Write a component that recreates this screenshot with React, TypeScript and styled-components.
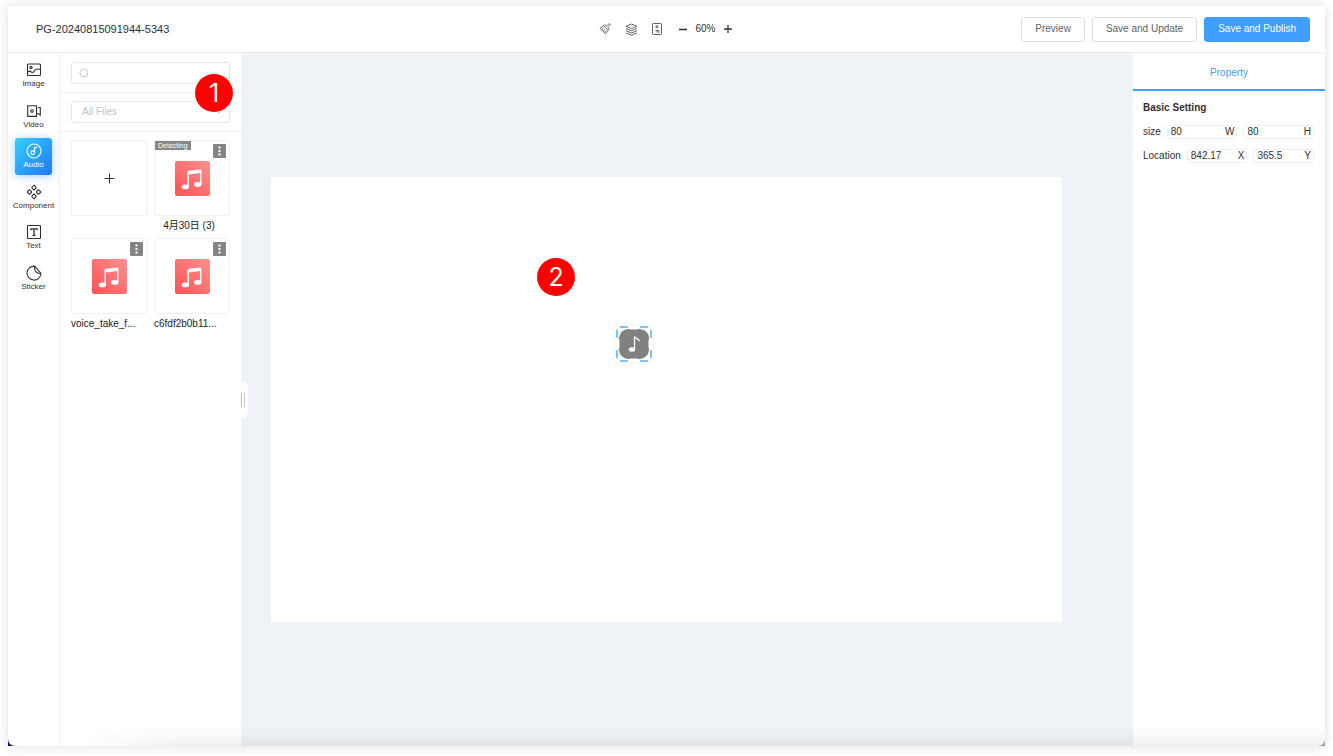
import React from "react";
import styled, { createGlobalStyle, css } from "styled-components";

const GlobalStyle = createGlobalStyle`
  * { box-sizing: border-box; }
  body {
    margin: 0;
    background: #fff;
    color: #303133;
    font: 10px/14px "Liberation Sans", "Noto Sans CJK SC", sans-serif;
  }
  button, input, select { font: inherit; color: inherit; margin: 0; }
  button { cursor: pointer; }
  svg { display: block; }
`;

const Page = styled.div`
  display: flex;
  min-height: 100vh;
  padding: 6px 8px 10px;
`;

const Frame = styled.div`
  position: relative;
  display: flex;
  flex: 1;
  min-width: 0;
  background: linear-gradient(90deg, #1f0a6b 50%, #a8a8a8 50%);
  box-shadow: 0 0 12px rgba(0, 0, 0, 0.13);
  &::after {
    content: "";
    position: absolute;
    inset: auto 0 0 72px;
    height: 22px;
    pointer-events: none;
    background: linear-gradient(rgba(0, 0, 0, 0), rgba(0, 0, 0, 0.02) 50%, rgba(0, 0, 0, 0.06));
    mask-image: linear-gradient(90deg, transparent, #000 100px);
  }
`;

const Shell = styled.div`
  display: flex;
  flex-direction: column;
  flex: 1;
  min-width: 0;
  overflow: hidden;
  border-radius: 0 0 7px 7px;
  background: #fff;
`;

const Header = styled.header`
  display: grid;
  grid-template-columns: 1fr auto 1fr;
  align-items: center;
  height: 47px;
  padding: 0 15px;
  border-bottom: 1px solid #ececec;
`;

const Title = styled.h1`
  margin: 0;
  padding-left: 13px;
  font-size: 11px;
  font-weight: 400;
`;

const Tools = styled.div`
  display: flex;
  align-items: center;
  gap: 12px;
`;

const Zoom = styled.div`
  display: flex;
  align-items: center;
  gap: 5px;
`;

const IconButton = styled.button`
  display: grid;
  place-items: center;
  width: 14px;
  height: 14px;
  padding: 0;
  border: 0;
  background: none;
`;

const Actions = styled.div`
  display: flex;
  justify-content: flex-end;
  gap: 7px;
`;

const ActionButton = styled.button<{ $primary?: boolean }>`
  height: 25px;
  padding: 0 13px;
  border: 1px solid ${(p) => (p.$primary ? "#409eff" : "#dcdfe6")};
  border-radius: 3px;
  background: ${(p) => (p.$primary ? "#409eff" : "#fff")};
  color: ${(p) => (p.$primary ? "#fff" : "#606266")};
  white-space: nowrap;
`;

const Body = styled.div`
  display: flex;
  flex: 1;
  min-height: 0;
`;

const Nav = styled.nav`
  width: 52px;
  flex: none;
  padding-top: 4px;
  border-right: 1px solid #f0f0f0;
`;

const NavList = styled.div`
  display: flex;
  flex-direction: column;
  justify-content: space-between;
  align-items: center;
  height: 240px;
`;

const NavItem = styled.button<{ $active?: boolean }>`
  display: flex;
  flex-direction: column;
  align-items: center;
  justify-content: center;
  width: 37px;
  height: 37px;
  padding: 0;
  border: 0;
  border-radius: 3px;
  background: none;
  font-size: 8px;
  line-height: 11px;
  ${(p) =>
    p.$active &&
    css`
      color: #fff;
      background: linear-gradient(135deg, #35d0ff, #1f78ff);
      box-shadow: 0 1px 8px rgba(64, 158, 255, 0.5);
    `}
`;

const Library = styled.aside`
  position: relative;
  width: 181px;
  flex: none;
  padding-top: 1px;
`;

const Filter = styled.div`
  padding: 8px 11px;
  border-bottom: 1px solid #f0f0f0;
`;

const control = css`
  width: 100%;
  height: 22px;
  border: 1px solid #e4e6eb;
  border-radius: 3px;
  background: #fff;
  color: #c0c4cc;
  outline: 0;
`;

const SearchBox = styled.label`
  ${control}
  display: flex;
  align-items: center;
  gap: 5px;
  padding: 0 7px;
  input {
    flex: 1;
    min-width: 0;
    border: 0;
    outline: 0;
    padding: 0;
  }
`;

const SelectBox = styled.div`
  position: relative;
  select {
    ${control}
    display: block;
    appearance: none;
    padding: 0 10px;
  }
  svg {
    position: absolute;
    right: 7px;
    top: 8px;
  }
`;

const Files = styled.div`
  display: grid;
  grid-template-columns: 76px 76px;
  gap: 2px 7px;
  padding: 8px 11px;
`;

const FileItem = styled.figure`
  margin: 0;
  height: 96px;
`;

const Tile = styled.div`
  position: relative;
  display: grid;
  place-items: center;
  height: 76px;
  border: 1px solid #f0f0f0;
  border-radius: 2px;
`;

const AddTile = styled(Tile).attrs({ as: "button", "aria-label": "Add audio" })`
  width: 76px;
  padding: 0;
  background: #fff;
`;

const FileName = styled.figcaption<{ $center?: boolean }>`
  padding: 3px 6px 0 0;
  color: #222;
  text-align: ${(p) => (p.$center ? "center" : "left")};
  white-space: nowrap;
`;

const Status = styled.span`
  position: absolute;
  left: 0;
  top: 0;
  padding: 0 3px;
  background: #888;
  color: #fff;
  font-size: 7px;
  line-height: 9px;
`;

const MoreButton = styled.button`
  position: absolute;
  right: 3px;
  top: 3px;
  display: grid;
  place-items: center;
  width: 13px;
  height: 14px;
  padding: 0;
  border: 0;
  border-radius: 1px;
  background: #848484;
`;

const Badge = styled.span`
  position: absolute;
  z-index: 3;
  width: 38px;
  height: 38px;
  border-radius: 50%;
  background: #f00;
  color: #fff;
  font: 25px/38px Inter, sans-serif;
  text-align: center;
`;

const LibraryBadge = styled(Badge)`
  right: 8px;
  top: 21px;
`;

const BoardBadge = styled(Badge)`
  left: 266px;
  top: 81px;
`;

const Stage = styled.main`
  position: relative;
  display: flex;
  align-items: center;
  flex: 1;
  min-width: 0;
  padding: 0 71px 0 30px;
  background: #eff3f8;
`;

const Grip = styled.button`
  position: absolute;
  left: 0;
  top: calc(50% - 18px);
  display: flex;
  align-items: center;
  gap: 2px;
  width: 7px;
  height: 36px;
  padding: 0;
  border: 0;
  border-radius: 0 6px 6px 0;
  background: #fff;
  i {
    width: 1px;
    height: 14px;
    background: #c8c8c8;
  }
`;

const Board = styled.div`
  position: relative;
  flex: 1;
  aspect-ratio: 16 / 9;
  background: #fff;
`;

const AudioNode = styled.div`
  position: absolute;
  left: 342px;
  top: 146px;
`;

const Properties = styled.aside`
  width: 192px;
  flex: none;
`;

const Tab = styled.button`
  display: block;
  width: 100%;
  height: 38px;
  padding: 3px 0 0;
  border: 0;
  border-bottom: 2px solid #409eff;
  background: none;
  color: #409eff;
`;

const Settings = styled.section`
  display: flex;
  flex-direction: column;
  gap: 10px;
  padding: 10px 11px 10px 10px;
`;

const SettingsTitle = styled.h2`
  margin: 0;
  font-size: 10px;
  line-height: 14px;
`;

const SettingRow = styled.div`
  display: flex;
  align-items: center;
  gap: 6px;
  height: 14px;
`;

const Group = styled.div`
  display: flex;
  flex-direction: column;
  gap: 10px;
`;

const Field = styled.label`
  display: flex;
  align-items: center;
  flex: 1;
  min-width: 0;
  height: 14px;
  padding: 0 2px 0 3px;
  border: 1px solid #f0f0f0;
  border-radius: 2px;
  input {
    flex: 1;
    width: 0;
    min-width: 0;
    height: 12px;
    padding: 0;
    border: 0;
    outline: 0;
    background: none;
  }
`;

const Stroke = ({ size = 16, children }: { size?: number; children: React.ReactNode }) => (
  <svg width={size} height={size} viewBox="0 0 16 16" fill="none" stroke="currentColor" strokeWidth="1.1" aria-hidden="true">
    {children}
  </svg>
);

const navItems = [
  {
    label: "Image",
    icon: (
      <>
        <rect x="1.5" y="2" width="13" height="11.500" rx="1" />
        <circle cx="5" cy="5.5" r="1.1" />
        <path d="M1.5 10.200c1.800-1.600 3-1.200 4 0 1.500.8 2.500-.4 3.200-1.700.8-1.300 1.800-1.800 3-1.300 1 .3 1.800 0 2.800-.5" />
      </>
    ),
  },
  {
    label: "Video",
    icon: (
      <>
        <path d="M10.500 2.800H1.700v10.600h8.800z" />
        <circle cx="6" cy="8" r="1.300" />
        <path d="M10.500 10.500h1.500l2.300 1.700V4.500H12" />
      </>
    ),
  },
  {
    label: "Audio",
    icon: (
      <>
        <circle cx="8" cy="8" r="7" />
        <circle cx="6.700" cy="9.800" r="1.900" />
        <path d="M8.600 9.800V4.500h2.700" />
      </>
    ),
  },
  {
    label: "Component",
    icon: (
      <path d="M8 1.200 10 3.200v1L8 6 6 4.200v-1zM8 10l2 1.800v1L8 14.800l-2-2v-1zM3.500 5.800 5.500 7.500v1L3.500 10.200l-2-1.700v-1zM12.500 5.800l2 1.700v1l-2 1.700-2-1.700v-1z" />
    ),
  },
  {
    label: "Text",
    icon: (
      <>
        <rect x="1.500" y="1.500" width="13" height="13" rx=".5" />
        <path d="M5 6.200V4.900h6v1.300M8 4.900v6.500M6.500 11.400h3" strokeWidth="1.300" />
      </>
    ),
  },
  {
    label: "Sticker",
    icon: (
      <>
        <path d="M8.500 1.100A7 7 0 1 0 15 8.500z" />
        <path d="M8.500 1.100C8 5.500 10 8.800 15 8.500" />
      </>
    ),
  },
];

const MusicArt = () => (
  <svg width="35" height="35" viewBox="0 0 35 35" aria-hidden="true">
    <defs>
      <linearGradient id="coral" x1="0" y1="1" x2="1" y2="0">
        <stop stopColor="#ff5353" />
        <stop offset="1" stopColor="#ff9090" />
      </linearGradient>
    </defs>
    <rect width="35" height="35" rx="2" fill="url(#coral)" />
    <g fill="#fff">
      <path d="M12.500 11.500q0-1.500 1.500-1.800L25 8.600q1.500 0 1.500 1.400V23h-1.400V11.900l-11.200 1.700v12h-1.400z" />
      <ellipse cx="10.400" cy="25.900" rx="3.700" ry="2.400" />
      <ellipse cx="22.800" cy="23.400" rx="3.700" ry="2.400" />
    </g>
  </svg>
);

const files = [
  { name: "4月30日 (3)", status: "Detecting", center: true },
  { name: "voice_take_f..." },
  { name: "c6fdf2b0b11..." },
];

const handles = [[4, 4], [38, 4], [4, 38], [38, 38]];

const NumberField = ({ name, value, unit }: { name: string; value: string; unit: string }) => (
  <Field>
    <input aria-label={name} defaultValue={value} />
    {unit}
  </Field>
);

export default function App() {
  return (
    <>
      <GlobalStyle />
      <Page>
        <Frame>
          <Shell>
            <Header>
              <Title>PG-20240815091944-5343</Title>
              <Tools>
                <IconButton aria-label="Clear">
                  <svg width="12" height="12" viewBox="0 0 12 12" fill="none" stroke="#606266" strokeWidth=".9" aria-hidden="true">
                    <path d="M1 5.200 4.700 2.700 9.200 7.200 6.500 11zM4.700 2.700l1-1 1.800 1.300L10.300.7l1 1L9 4.500l1.200 1.700-1 1M2.500 6.800 4.500 5M4 8.300l2-1.800M5.300 9.700l2-2" />
                  </svg>
                </IconButton>
                <IconButton aria-label="Layers">
                  <svg width="13" height="13" viewBox="0 0 13 13" fill="none" stroke="#606266" strokeWidth="1" aria-hidden="true">
                    <path d="M6.500 1 12 3.300 6.500 5.600 1 3.300zM1 5.500l5.500 2.300L12 5.500M1 7.700 6.500 10 12 7.700M1 9.900l5.500 2.300L12 9.900" />
                  </svg>
                </IconButton>
                <IconButton aria-label="Canvas settings">
                  <svg width="12" height="12" viewBox="0 0 12 12" fill="none" stroke="#606266" aria-hidden="true">
                    <rect x="1.500" y=".5" width="9" height="11" rx=".8" />
                    <path d="M6 2v3.600M4.200 3.800h3.600M4.500 7.500h3.300v2.500M6 7.500v2" />
                  </svg>
                </IconButton>
                <Zoom>
                  <IconButton aria-label="Zoom out">
                    <svg width="10" height="10" stroke="#303133" strokeWidth="1.300" aria-hidden="true"><path d="M1 5.500h8" /></svg>
                  </IconButton>
                  <span>60%</span>
                  <IconButton aria-label="Zoom in">
                    <svg width="10" height="10" stroke="#303133" strokeWidth="1.300" aria-hidden="true"><path d="M1 5h8M5 1v8" /></svg>
                  </IconButton>
                </Zoom>
              </Tools>
              <Actions>
                <ActionButton>Preview</ActionButton>
                <ActionButton>Save and Update</ActionButton>
                <ActionButton $primary>Save and Publish</ActionButton>
              </Actions>
            </Header>
            <Body>
              <Nav>
                <NavList>
                  {navItems.map((item) => (
                    <NavItem key={item.label} $active={item.label === "Audio"}>
                      <Stroke>{item.icon}</Stroke>
                      {item.label}
                    </NavItem>
                  ))}
                </NavList>
              </Nav>
              <Library>
                <Filter>
                  <SearchBox>
                    <svg width="10" height="10" viewBox="0 0 10 10" fill="none" stroke="#c0c4cc" strokeWidth=".9" aria-hidden="true">
                      <circle cx="4.800" cy="4.700" r="3.900" />
                      <path d="m7.500 7.500 1.500 1.500" />
                    </svg>
                    <input type="text" aria-label="Search files" />
                  </SearchBox>
                </Filter>
                <Filter>
                  <SelectBox>
                    <select aria-label="File filter">
                      <option>All Files</option>
                    </select>
                    <svg width="8" height="6" fill="none" stroke="#c0c4cc" aria-hidden="true"><path d="m1 1 3 3 3-3" /></svg>
                  </SelectBox>
                </Filter>
                <Files>
                  <AddTile>
                    <svg width="11" height="11" stroke="#303133" strokeWidth="1" aria-hidden="true"><path d="M.5 5.500h10M5.500.5v10" /></svg>
                  </AddTile>
                  {files.map((file) => (
                    <FileItem key={file.name}>
                      <Tile>
                        <MusicArt />
                        {file.status && <Status>{file.status}</Status>}
                        <MoreButton aria-label={`More for ${file.name}`}>
                          <svg width="3" height="10" fill="#fff" aria-hidden="true">
                            <rect x=".5" y=".5" width="2" height="2" />
                            <rect x=".5" y="4" width="2" height="2" />
                            <rect x=".5" y="7.500" width="2" height="2" />
                          </svg>
                        </MoreButton>
                      </Tile>
                      <FileName $center={file.center}>{file.name}</FileName>
                    </FileItem>
                  ))}
                </Files>
                <LibraryBadge>1</LibraryBadge>
              </Library>
              <Stage>
                <Grip aria-label="Collapse panel"><i /><i /></Grip>
                <Board>
                  <BoardBadge>2</BoardBadge>
                  <AudioNode>
                    <svg width="42" height="42" viewBox="0 0 42 42" aria-hidden="true">
                      <path d="M15 6h12q9 2 9 9v12q-1 8-9 9H15q-8-1-9-9V15q1-8 9-9z" fill="#808080" />
                      <rect x="4" y="4" width="34" height="34" fill="none" stroke="#52aef0" strokeWidth="1.500" />
                      <g fill="#fff" stroke="#eee" strokeWidth=".6">
                        {handles.map(([x, y]) => (
                          <circle key={`${x}-${y}`} cx={x} cy={y} r="2.800" />
                        ))}
                        <rect x="15" y="1.200" width="12" height="5" rx="2.500" />
                        <rect x="15" y="35.800" width="12" height="5" rx="2.500" />
                        <rect x="1.200" y="15" width="5" height="12" rx="2.500" />
                        <rect x="35.800" y="15" width="5" height="12" rx="2.500" />
                      </g>
                      <path d="M21.500 26V13.500c1 2.600 4.600 1.800 4.900 4.800" fill="none" stroke="#fff" strokeWidth="1.300" />
                      <ellipse cx="19" cy="26.500" rx="3.200" ry="2.200" fill="#fff" />
                    </svg>
                  </AudioNode>
                </Board>
              </Stage>
              <Properties>
                <Tab>Property</Tab>
                <Settings>
                  <SettingsTitle>Basic Setting</SettingsTitle>
                  <Group>
                    <SettingRow>
                      size
                      <NumberField name="Width" value="80" unit="W" />
                      <NumberField name="Height" value="80" unit="H" />
                    </SettingRow>
                    <SettingRow>
                      Location
                      <NumberField name="X position" value="842.17" unit="X" />
                      <NumberField name="Y position" value="365.5" unit="Y" />
                    </SettingRow>
                  </Group>
                </Settings>
              </Properties>
            </Body>
          </Shell>
        </Frame>
      </Page>
    </>
  );
}
